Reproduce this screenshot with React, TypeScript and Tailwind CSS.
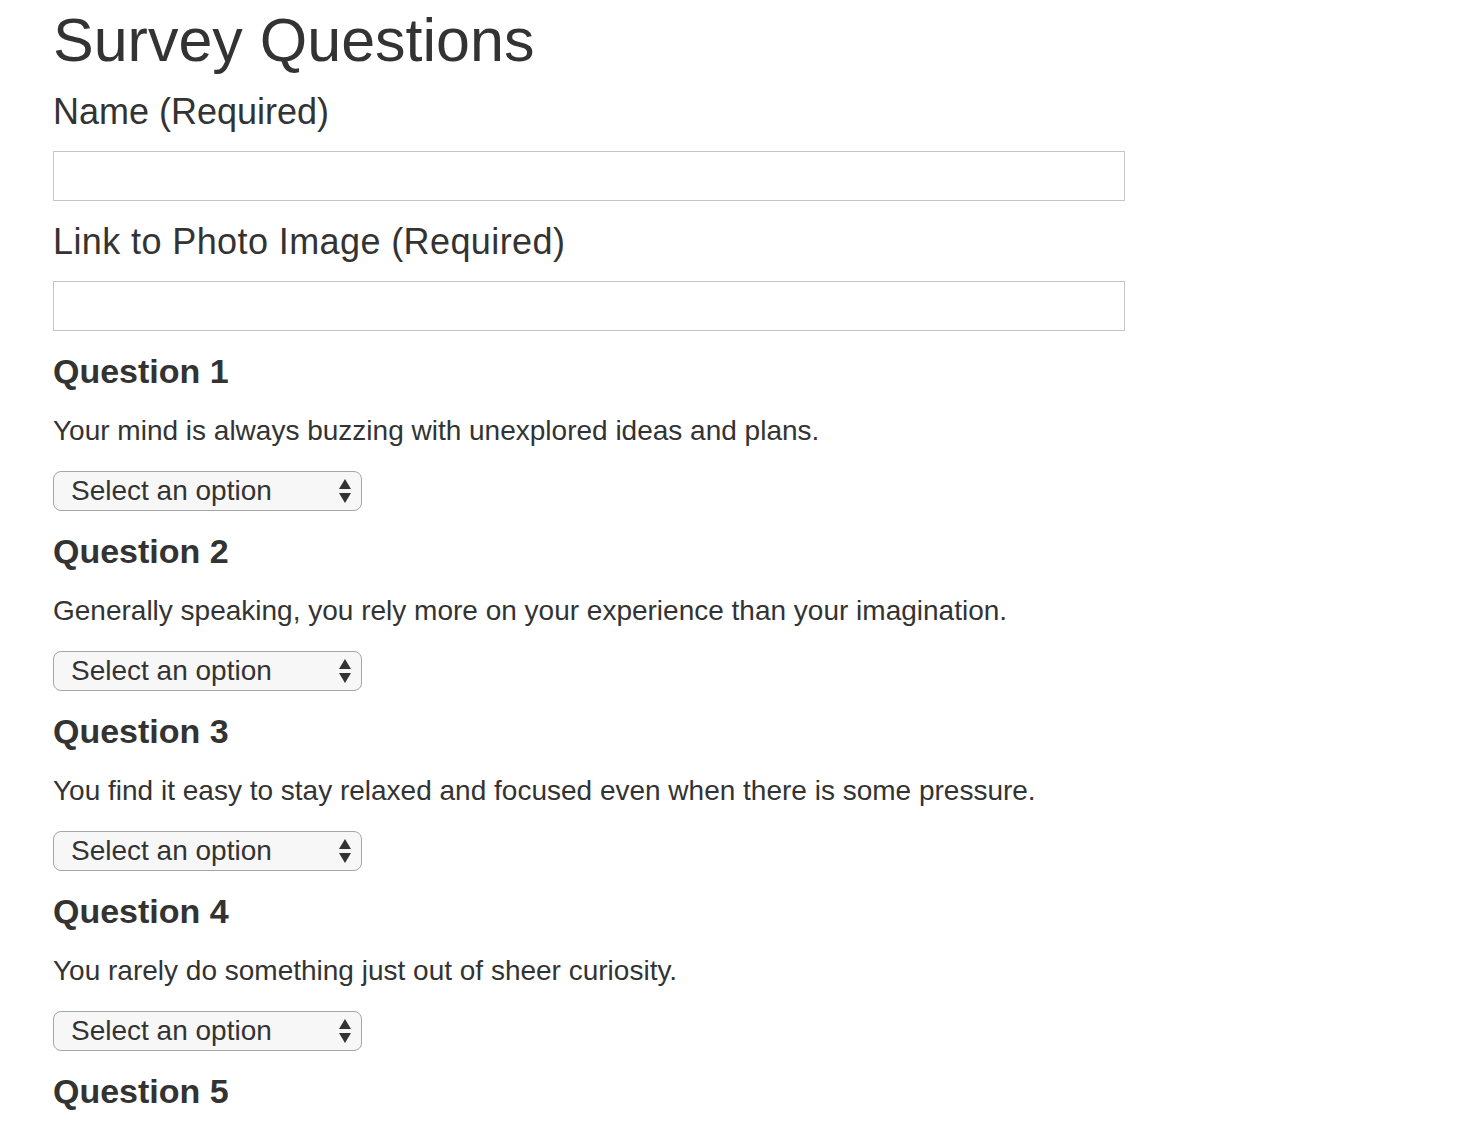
import { useState } from 'react';

interface Question {
  id: number;
  text: string;
}

const questions: Question[] = [
  { id: 1, text: 'Your mind is always buzzing with unexplored ideas and plans.' },
  { id: 2, text: 'Generally speaking, you rely more on your experience than your imagination.' },
  { id: 3, text: 'You find it easy to stay relaxed and focused even when there is some pressure.' },
  { id: 4, text: 'You rarely do something just out of sheer curiosity.' },
  { id: 5, text: 'You feel superior to other people.' },
];

const options = ['1 (Strongly Disagree)', '2', '3', '4', '5 (Strongly Agree)'];

function SelectArrows() {
  return (
    <svg
      className="pointer-events-none absolute right-[10px] top-1/2 -translate-y-1/2"
      width="14"
      height="28"
      viewBox="0 0 14 28"
    >
      <path d="M7 2 L13 12 L1 12 Z" fill="#333" />
      <path d="M1 16 L13 16 L7 26 Z" fill="#333" />
    </svg>
  );
}

export default function App() {
  const [answers, setAnswers] = useState<Record<number, string>>({});
  const [name, setName] = useState('');
  const [photo, setPhoto] = useState('');

  return (
    <div
      className="min-h-screen bg-white pl-[53px] text-[#333]"
      style={{ fontFamily: '"Liberation Sans", Arial, Helvetica, sans-serif' }}
    >
      <h1 className="text-[61px] leading-[80px] font-normal">Survey Questions</h1>

      <h3 className="mt-[12px] text-[36px] leading-[40px] font-normal">Name (Required)</h3>
      <input
        type="text"
        value={name}
        onChange={(e) => setName(e.target.value)}
        className="mt-[19px] block h-[50px] w-[1072px] border border-[#c6c6c6] bg-white px-3 text-[28px] outline-none"
      />

      <h3 className="mt-[21px] text-[36px] leading-[40px] font-normal tracking-[0.4px]">
        Link to Photo Image (Required)
      </h3>
      <input
        type="text"
        value={photo}
        onChange={(e) => setPhoto(e.target.value)}
        className="mt-[19px] block h-[50px] w-[1072px] border border-[#c6c6c6] bg-white px-3 text-[28px] outline-none"
      />

      {questions.map((q) => (
        <div key={q.id} className="mt-[20px]">
          <h3 className="text-[34px] leading-[40px] font-bold">Question {q.id}</h3>
          <p className="mt-[21px] text-[28px] leading-[38px]">{q.text}</p>
          <div className="relative mt-[21px] w-[309px]">
            <select
              value={answers[q.id] ?? ''}
              onChange={(e) => setAnswers({ ...answers, [q.id]: e.target.value })}
              className="block h-[40px] w-full appearance-none rounded-[8px] border border-[#a5a5a5] bg-[#f7f7f7] pl-[17px] text-[28px] leading-[38px] text-[#333] outline-none"
            >
              <option value="">Select an option</option>
              {options.map((o) => (
                <option key={o} value={o}>
                  {o}
                </option>
              ))}
            </select>
            <SelectArrows />
          </div>
        </div>
      ))}
    </div>
  );
}
